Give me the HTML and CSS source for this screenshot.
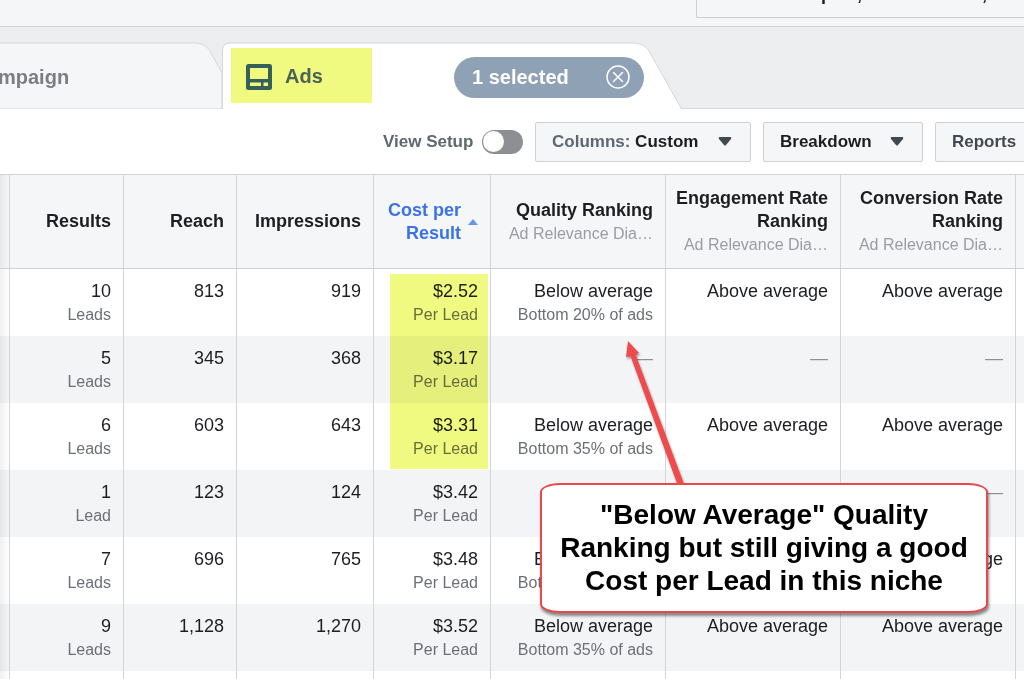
FILE: index.html
```html
<!DOCTYPE html>
<html lang="en">
<head>
<meta charset="utf-8">
<title>Ads Manager</title>
<link rel="stylesheet" href="styles.css">
</head>
<body>
<header class="topbar"><button class="date-range" type="button">Sep 18, 2019 – Oct 17, 2019</button></header>

<nav class="tabs">
  <a class="tab tab-campaign" href="#campaign">
    <svg class="tab-shape" width="222" height="67" viewBox="0 0 222 67" aria-hidden="true"><path d="M-2 1H195Q205 1 210 9L222 31V67H-2Z" fill="#f5f6f8" stroke="#d5d7da"/></svg>
    <span class="tab-label">mpaign</span>
  </a>
  <div class="tab tab-ads">
    <svg class="tab-shape" width="462" height="67" viewBox="0 0 462 67" aria-hidden="true"><path d="M0.500 68V9Q0.500 1 8 1H411Q422 1 427 9L459 66L460 68Z" fill="#fff" stroke="#d5d7da"/></svg>
    <a class="ads-link" href="#ads">
      <svg width="28" height="28" viewBox="0 0 28 28" aria-hidden="true"><path fill="#356158" fill-rule="evenodd" d="M3.500 1H24.500Q27 1 27 3.500V24.500Q27 27 24.500 27H3.500Q1 27 1 24.500V3.500Q1 1 3.500 1ZM5 5V16H23V5ZM5 19.500V23H16V19.500ZM18.500 19.500V23H23V19.500Z"/></svg>
      <span>Ads</span>
    </a>
    <div class="selected">
      <span>1 selected</span>
      <button class="clear" type="button" aria-label="Clear selection">
        <svg width="24" height="24" viewBox="0 0 24 24" fill="none" stroke="#fff" stroke-width="1.500" stroke-linecap="round" aria-hidden="true"><circle cx="12" cy="12" r="11"/><path d="M7.500 7.500L16.500 16.500M16.500 7.500L7.500 16.500"/></svg>
      </button>
    </div>
  </div>
</nav>

<div class="toolbar">
  <label class="setup"><span>View Setup</span><input class="switch" type="checkbox" role="switch"></label>
  <button class="btn btn-columns" type="button"><span><span class="muted">Columns:</span> Custom</span><svg width="14" height="9" viewBox="0 0 14 9" aria-hidden="true"><path d="M1.500 0H12.500Q14 .5 13 2L8 8Q7 9 6 8L1 2Q0 .5 1.500 0Z" fill="#444950"/></svg></button>
  <button class="btn btn-breakdown" type="button"><span>Breakdown</span><svg width="14" height="9" viewBox="0 0 14 9" aria-hidden="true"><path d="M1.500 0H12.500Q14 .5 13 2L8 8Q7 9 6 8L1 2Q0 .5 1.500 0Z" fill="#444950"/></svg></button>
  <button class="btn btn-reports" type="button"><span>Reports</span></button>
</div>

<main class="report">
  <table class="grid">
    <colgroup><col class="c-edge"><col class="c-results"><col class="c-reach"><col class="c-impr"><col class="c-cost"><col class="c-rank"><col class="c-rank"><col class="c-rank"><col class="c-rest"></colgroup>
    <thead>
      <tr>
        <td class="edge"></td>
        <th>Results</th><th>Reach</th><th>Impressions</th>
        <th><div class="sorted"><span>Cost per<br>Result</span><svg width="10" height="6" viewBox="0 0 10 6" aria-hidden="true"><path d="M5 0L10 6H0Z" fill="#6495f0"/></svg></div></th>
        <th>Quality Ranking<small>Ad Relevance Dia…</small></th>
        <th>Engagement Rate Ranking<small>Ad Relevance Dia…</small></th>
        <th>Conversion Rate Ranking<small>Ad Relevance Dia…</small></th>
        <td></td>
      </tr>
    </thead>
    <tbody>
      <tr><td class="edge"></td><td>10<small>Leads</small></td><td>813</td><td>919</td><td>$2.52<small>Per Lead</small></td><td>Below average<small>Bottom 20% of ads</small></td><td>Above average</td><td>Above average</td><td></td></tr>
      <tr><td class="edge"></td><td>5<small>Leads</small></td><td>345</td><td>368</td><td>$3.17<small>Per Lead</small></td><td class="none">—</td><td class="none">—</td><td class="none">—</td><td></td></tr>
      <tr><td class="edge"></td><td>6<small>Leads</small></td><td>603</td><td>643</td><td>$3.31<small>Per Lead</small></td><td>Below average<small>Bottom 35% of ads</small></td><td>Above average</td><td>Above average</td><td></td></tr>
      <tr><td class="edge"></td><td>1<small>Lead</small></td><td>123</td><td>124</td><td>$3.42<small>Per Lead</small></td><td class="none">—</td><td class="none">—</td><td class="none">—</td><td></td></tr>
      <tr><td class="edge"></td><td>7<small>Leads</small></td><td>696</td><td>765</td><td>$3.48<small>Per Lead</small></td><td>Below average<small>Bottom 35% of ads</small></td><td>Above average</td><td>Above average</td><td></td></tr>
      <tr><td class="edge"></td><td>9<small>Leads</small></td><td>1,128</td><td>1,270</td><td>$3.52<small>Per Lead</small></td><td>Below average<small>Bottom 35% of ads</small></td><td>Above average</td><td>Above average</td><td></td></tr>
      <tr><td class="edge"></td><td></td><td></td><td></td><td></td><td></td><td></td><td></td><td></td></tr>
    </tbody>
  </table>
  <div class="marker"></div>
  <svg class="arrow" width="80" height="155" viewBox="0 0 80 155" aria-hidden="true"><path d="M7 1L18 13L14.500 14.500L63 144L57 146L9.500 16L5 17Z" fill="#f04a4c"/></svg>
  <aside class="callout">"Below Average" Quality<br>Ranking but still giving a good<br>Cost per Lead in this niche</aside>
</main>
</body>
</html>
```
FILE: styles.css
```css
* { box-sizing: border-box; }
body {
  margin: 0;
  height: 100vh;
  overflow: hidden;
  background: #fff;
  color: #1c1e21;
  font-family: "Liberation Sans", Arial, sans-serif;
  font-size: 18px;
}
button { font: inherit; color: inherit; cursor: pointer; }
a { color: inherit; text-decoration: none; }
svg { display: block; flex: none; }

.topbar {
  height: 27px;
  display: flex;
  justify-content: flex-end;
  align-items: flex-end;
  padding-bottom: 8px;
  background: #f5f6f8;
  border-bottom: 1px solid #d5d7da;
  overflow: hidden;
}
.date-range {
  flex: none;
  width: 328px;
  height: 42px;
  padding: 0 0 5px 102px;
  text-align: left;
  font-weight: bold;
  white-space: nowrap;
  overflow: hidden;
  background: #f5f6f8;
  border: 1px solid #ccd0d5;
  border-right: 0;
  border-radius: 2px 0 0 2px;
}

.tabs {
  display: flex;
  height: 82px;
  padding-top: 15px;
  background: #edeef0;
  border-bottom: 1px solid #d5d7da;
}
.tab {
  position: relative;
  flex: none;
  display: flex;
  align-items: center;
  height: 67px;
  font-size: 20px;
  font-weight: bold;
}
.tab-shape { position: absolute; left: 0; top: 0; }
.tab-campaign { width: 222px; color: #7b7e83; }
.tab-label { position: relative; margin: 3px 0 0 -2px; }
.tab-ads { width: 462px; padding-left: 9px; }
.ads-link {
  position: relative;
  display: flex;
  align-items: center;
  gap: 12px;
  width: 141px;
  height: 55px;
  padding: 2px 0 0 14px;
  background: #f1fa80;
  color: #4a6355;
}
.selected {
  position: relative;
  display: flex;
  align-items: center;
  justify-content: space-between;
  width: 190px;
  height: 41px;
  margin: 3px 0 0 82px;
  padding: 0 14px 0 18px;
  border-radius: 21px;
  background: #8fa1b4;
  color: #fff;
}
.clear { padding: 0; border: 0; background: none; }

.toolbar {
  display: flex;
  align-items: center;
  gap: 12px;
  height: 65px;
  padding-left: 383px;
  overflow: hidden;
  font-size: 17px;
  font-weight: bold;
}
.setup {
  flex: none;
  display: flex;
  align-items: center;
  justify-content: space-between;
  width: 140px;
  color: #606770;
  white-space: nowrap;
}
.switch {
  appearance: none;
  display: flex;
  align-items: center;
  width: 41px;
  height: 24px;
  margin: 0;
  padding: 1px;
  border-radius: 12px;
  background: #8d8f92;
}
.switch::before {
  content: "";
  width: 21px;
  height: 21px;
  border-radius: 50%;
  background: #fff;
}
.switch:checked { justify-content: flex-end; background: #3578e5; }
.btn {
  flex: none;
  display: flex;
  align-items: center;
  justify-content: space-between;
  height: 40px;
  padding: 0 18px 0 16px;
  background: #f5f6f8;
  border: 1px solid #ced0d4;
  border-radius: 2px;
  white-space: nowrap;
}
.btn-columns { width: 216px; }
.btn-breakdown { width: 160px; }
.btn-reports { width: 130px; color: #444950; }
.muted { color: #606770; }

.report { position: relative; }
.grid {
  width: 100%;
  table-layout: fixed;
  border-collapse: separate;
  border-spacing: 0;
  text-align: right;
}
.c-edge { width: 10px; }
.c-results { width: 114px; }
.c-reach { width: 113px; }
.c-impr { width: 137px; }
.c-cost { width: 117px; }
.c-rank { width: 175px; }
.grid th, .grid td {
  padding: 0 12px 0 8px;
  border-right: 1px solid #d3d5d8;
  line-height: 23px;
}
.grid tr > :last-child { border-right: 0; }
.grid thead th, .grid thead td {
  height: 95px;
  vertical-align: middle;
  background-color: #f5f6f8;
  border-top: 1px solid #ced0d4;
  border-bottom: 1px solid #ced0d4;
}
.grid tbody td {
  height: 67px;
  padding-top: 11px;
  vertical-align: top;
}
.grid tbody tr:nth-child(even) { background: #f3f4f6; }
.grid small { display: block; font-size: 16px; font-weight: normal; color: #6c7076; white-space: nowrap; }
.grid th small { color: #999da3; }
.grid .none { color: #8d9095; }
.grid .edge {
  padding: 0;
  background-image: linear-gradient(to right, rgba(0, 0, 0, .06), transparent);
}
.sorted {
  display: flex;
  align-items: center;
  justify-content: flex-end;
  gap: 7px;
  color: #3b73e6;
}

.marker {
  position: absolute;
  left: 390px;
  top: 100px;
  width: 98px;
  height: 195px;
  background: #f1fa80;
  mix-blend-mode: multiply;
}
.arrow {
  position: absolute;
  left: 621px;
  top: 166px;
  filter: drop-shadow(1px 2px 1px rgba(0, 0, 0, .4));
}
.callout {
  position: absolute;
  left: 540px;
  top: 309px;
  width: 448px;
  padding: 13px 0 14px;
  border: 2px solid #e8484b;
  border-radius: 20px / 9px;
  background: #fff;
  box-shadow: 1px 3px 3px rgba(0, 0, 0, .45);
  color: #000;
  font-size: 28px;
  font-weight: bold;
  line-height: 33px;
  text-align: center;
  white-space: nowrap;
}
```
